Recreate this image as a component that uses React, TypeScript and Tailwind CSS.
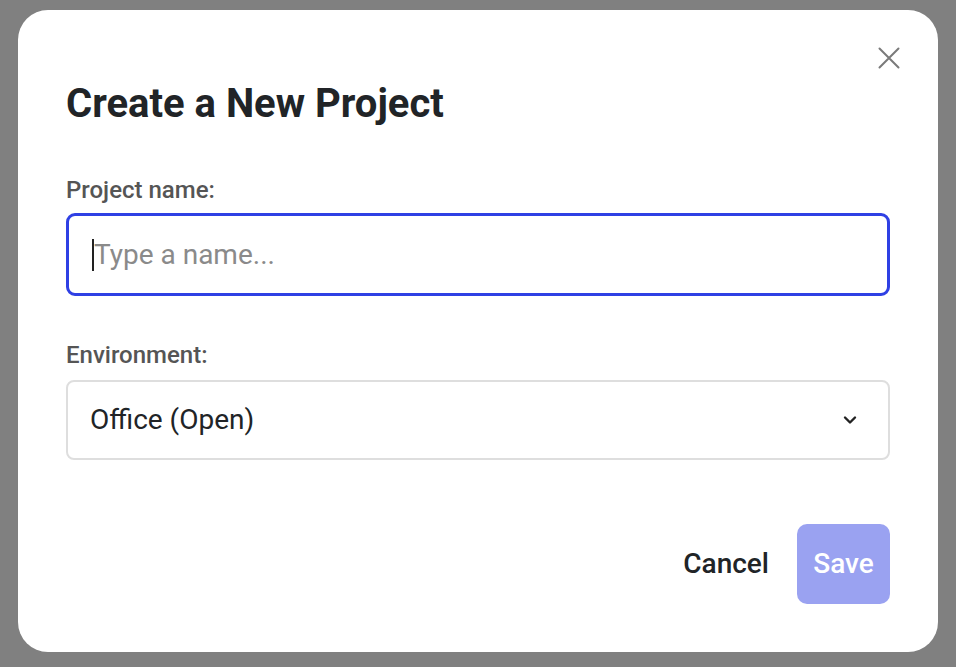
import React from "react";

export default function App() {
  return (
    <div
      className="w-[956px] h-[667px] bg-[#808080] pt-[10px] pl-[18px] overflow-hidden"
      style={{ fontFamily: "Roboto, 'Liberation Sans', sans-serif" }}
    >
      <div className="relative w-[920px] h-[642px] bg-white rounded-[30px] pl-[48px] pr-[48px] pt-[70px] flex flex-col">
        <button className="absolute right-[38px] top-[37px] w-[22px] h-[22px] flex items-center justify-center text-[#7a7a7a]">
          <svg width="22" height="22" viewBox="0 0 22 22" fill="none" stroke="currentColor" strokeWidth="2" strokeLinecap="round">
            <path d="M1.5 1.5 L20.5 20.5 M20.5 1.5 L1.5 20.5" />
          </svg>
        </button>
        <h1 className="text-[40px] leading-[48px] font-bold text-[#212427]">
          Create a New Project
        </h1>
        <label className="mt-[48px] text-[24px] leading-[28px] font-medium text-[#555555]">
          Project name:
        </label>
        <div className="mt-[9px] h-[83px] border-[3px] border-[#2f40e4] rounded-[9px] flex items-center pl-[23px]">
          <span className="w-[2px] h-[32px] bg-[#222]" />
          <span className="text-[28px] text-[#8a8a8a] leading-[34px]">Type a name...</span>
        </div>
        <label className="mt-[45px] text-[24px] leading-[28px] font-medium text-[#555555]">
          Environment:
        </label>
        <div className="mt-[11px] h-[80px] border-2 border-[#dedede] rounded-[8px] flex items-center justify-between pl-[22px] pr-[31px]">
          <span className="text-[28px] text-[#212427] leading-[34px]">Office (Open)</span>
          <svg width="14" height="10" viewBox="0 0 14 10" fill="none" stroke="#222" strokeWidth="2.4" strokeLinecap="round" strokeLinejoin="round">
            <path d="M2 2.5 L7 7.5 L12 2.5" />
          </svg>
        </div>
        <div className="mt-[64px] flex justify-end items-center gap-[28px]">
          <button className="text-[28px] font-medium text-[#212427] leading-[34px]">Cancel</button>
          <button className="w-[93px] h-[80px] rounded-[10px] bg-[#9aa2f1] text-white text-[28px] font-medium leading-[34px]">
            Save
          </button>
        </div>
      </div>
    </div>
  );
}
